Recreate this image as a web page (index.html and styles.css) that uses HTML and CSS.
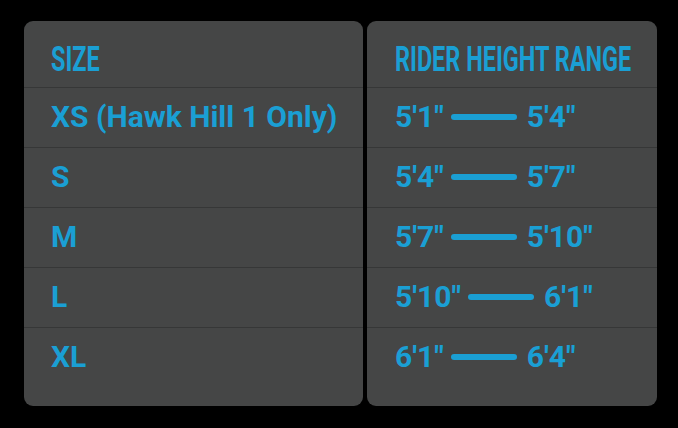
FILE: index.html
```html
<!DOCTYPE html>
<html>
<head>
<meta charset="utf-8">
<link rel="stylesheet" href="styles.css">
</head>
<body>
<div class="chart">
  <div class="card card-size">
    <div class="head"><span class="head-text">SIZE</span></div>
    <div class="row">XS (Hawk Hill 1 Only)</div>
    <div class="row">S</div>
    <div class="row">M</div>
    <div class="row">L</div>
    <div class="row last">XL</div>
  </div>
  <div class="card card-range">
    <div class="head"><span class="head-text">RIDER HEIGHT RANGE</span></div>
    <div class="row"><span>5'1"</span><span class="dash"></span><span>5'4"</span></div>
    <div class="row"><span>5'4"</span><span class="dash"></span><span>5'7"</span></div>
    <div class="row"><span>5'7"</span><span class="dash"></span><span>5'10"</span></div>
    <div class="row"><span>5'10"</span><span class="dash"></span><span>6'1"</span></div>
    <div class="row last"><span>6'1"</span><span class="dash"></span><span>6'4"</span></div>
  </div>
</div>
</body>
</html>
```
FILE: styles.css
```css
html, body {
  margin: 0;
  padding: 0;
  background: #000;
}
body {
  width: 678px;
  height: 428px;
  overflow: hidden;
}
.chart {
  display: flex;
  gap: 4px;
  padding: 21px 0 0 24px;
}
.card {
  background: #454646;
  border-radius: 9px;
  height: 385px;
  display: flex;
  flex-direction: column;
  font-family: Roboto, "Liberation Sans", sans-serif;
  color: #1a9fd4;
  overflow: hidden;
}
.card-size {
  width: 339px;
}
.card-size .head,
.card-size .row {
  padding-left: 27px;
}
.card-range {
  width: 290px;
}
.card-range .head,
.card-range .row {
  padding-left: 28px;
}
.head {
  height: 67px;
  box-sizing: border-box;
  padding-top: 18px;
  border-bottom: 1px solid #363737;
  white-space: nowrap;
}
.head-text {
  display: inline-block;
  font-size: 35px;
  font-weight: 700;
  line-height: 41px;
  transform: scaleX(0.67);
  transform-origin: left center;
}
.row {
  height: 60px;
  box-sizing: border-box;
  padding-top: 11px;
  border-bottom: 1px solid #363737;
  font-size: 30px;
  font-weight: 700;
  line-height: 35px;
  display: flex;
  align-items: flex-start;
  white-space: nowrap;
}
.row.last {
  border-bottom: none;
}
.dash {
  display: block;
  width: 66px;
  height: 6px;
  border-radius: 3px;
  background: #1a9fd4;
  margin: 15px 10px 0 7px;
}
```
